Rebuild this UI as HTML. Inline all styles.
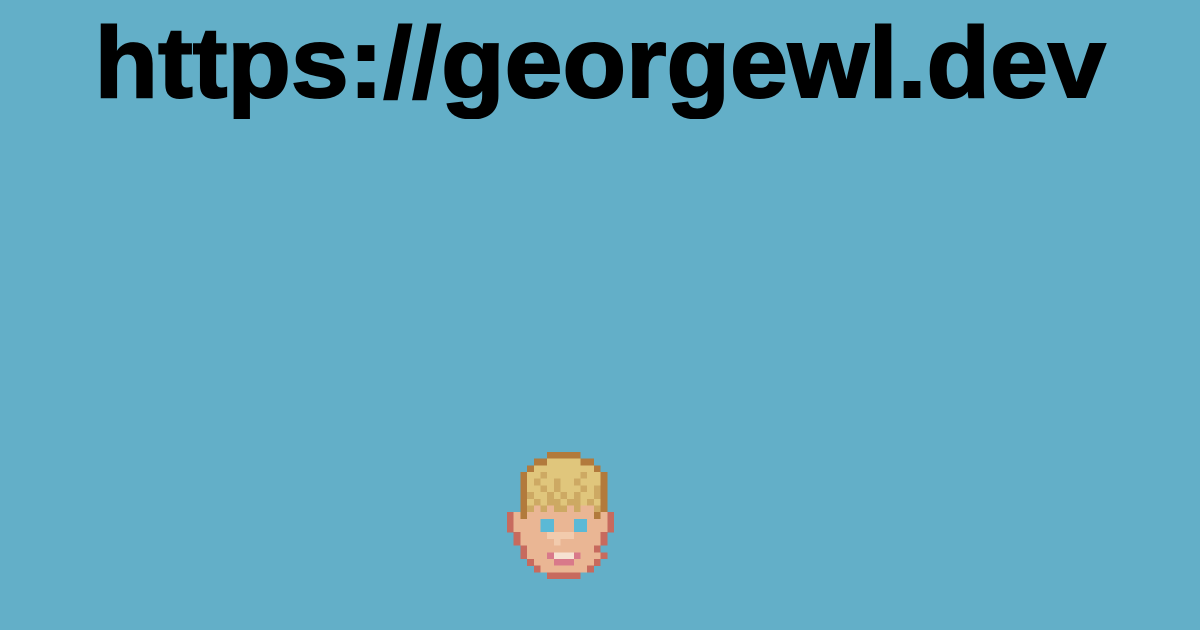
<!DOCTYPE html>
<html><head><meta charset="utf-8"><style>
html,body{margin:0;padding:0;}
body{width:1200px;height:630px;background:#63afc8;position:relative;overflow:hidden;}
#t{position:absolute;left:0;width:1200px;top:13px;text-align:center;font:bold 100px/100px "Liberation Sans",sans-serif;color:#000;white-space:nowrap;}
#t span{display:inline-block;transform:scaleX(1.04);transform-origin:center;-webkit-text-stroke:2px #000;}
#f{position:absolute;left:507px;top:452px;}
</style></head><body>
<div id="t"><span>https://georgewl.dev</span></div>
<svg id="f" width="107" height="127" viewBox="0 0 16 19" shape-rendering="crispEdges"></svg>
<script>
var rows=[
"......BBBBB.....",
"....BBHHHHHBB...",
"...BHHHHHHHHHB..",
"..BHHMHHHHHMHHB.",
"..BHMHHMHHMHHHB.",
"..BHHMHMHHHMHMB.",
"..BMHHMHMHMHHMB.",
"..BHMHMMHMMHMHB.",
"..BMSMSMMSMSSMB.",
"OSBSSSSSSSSSSBSO",
"OSSSSEESSSEESSSO",
"OSSSSEESSSEESSSO",
".OSSSSLLLLSSSSO.",
".OSSSSSLSSSSSSO.",
"..OSSSSSSSSSSO..",
"..OSSSPTTTPSSSO.",
"...OSSSPPPSSSO..",
"....OSSSSSSSO...",
"......OOOOO....."];
var c={B:"#b27a3c",H:"#e0c67c",M:"#cda963",S:"#eab694",O:"#c76a5e",E:"#5bb9d6",P:"#d9798a",T:"#f6e2d2",L:"#f2cbad"};
var s=document.getElementById('f'),h='';
rows.forEach(function(r,y){for(var x=0;x<r.length;x++){var k=r[x];if(c[k])h+='<rect x="'+x+'" y="'+y+'" width="1.02" height="1.02" fill="'+c[k]+'"/>';}});
s.innerHTML=h;
</script>
</body></html>
